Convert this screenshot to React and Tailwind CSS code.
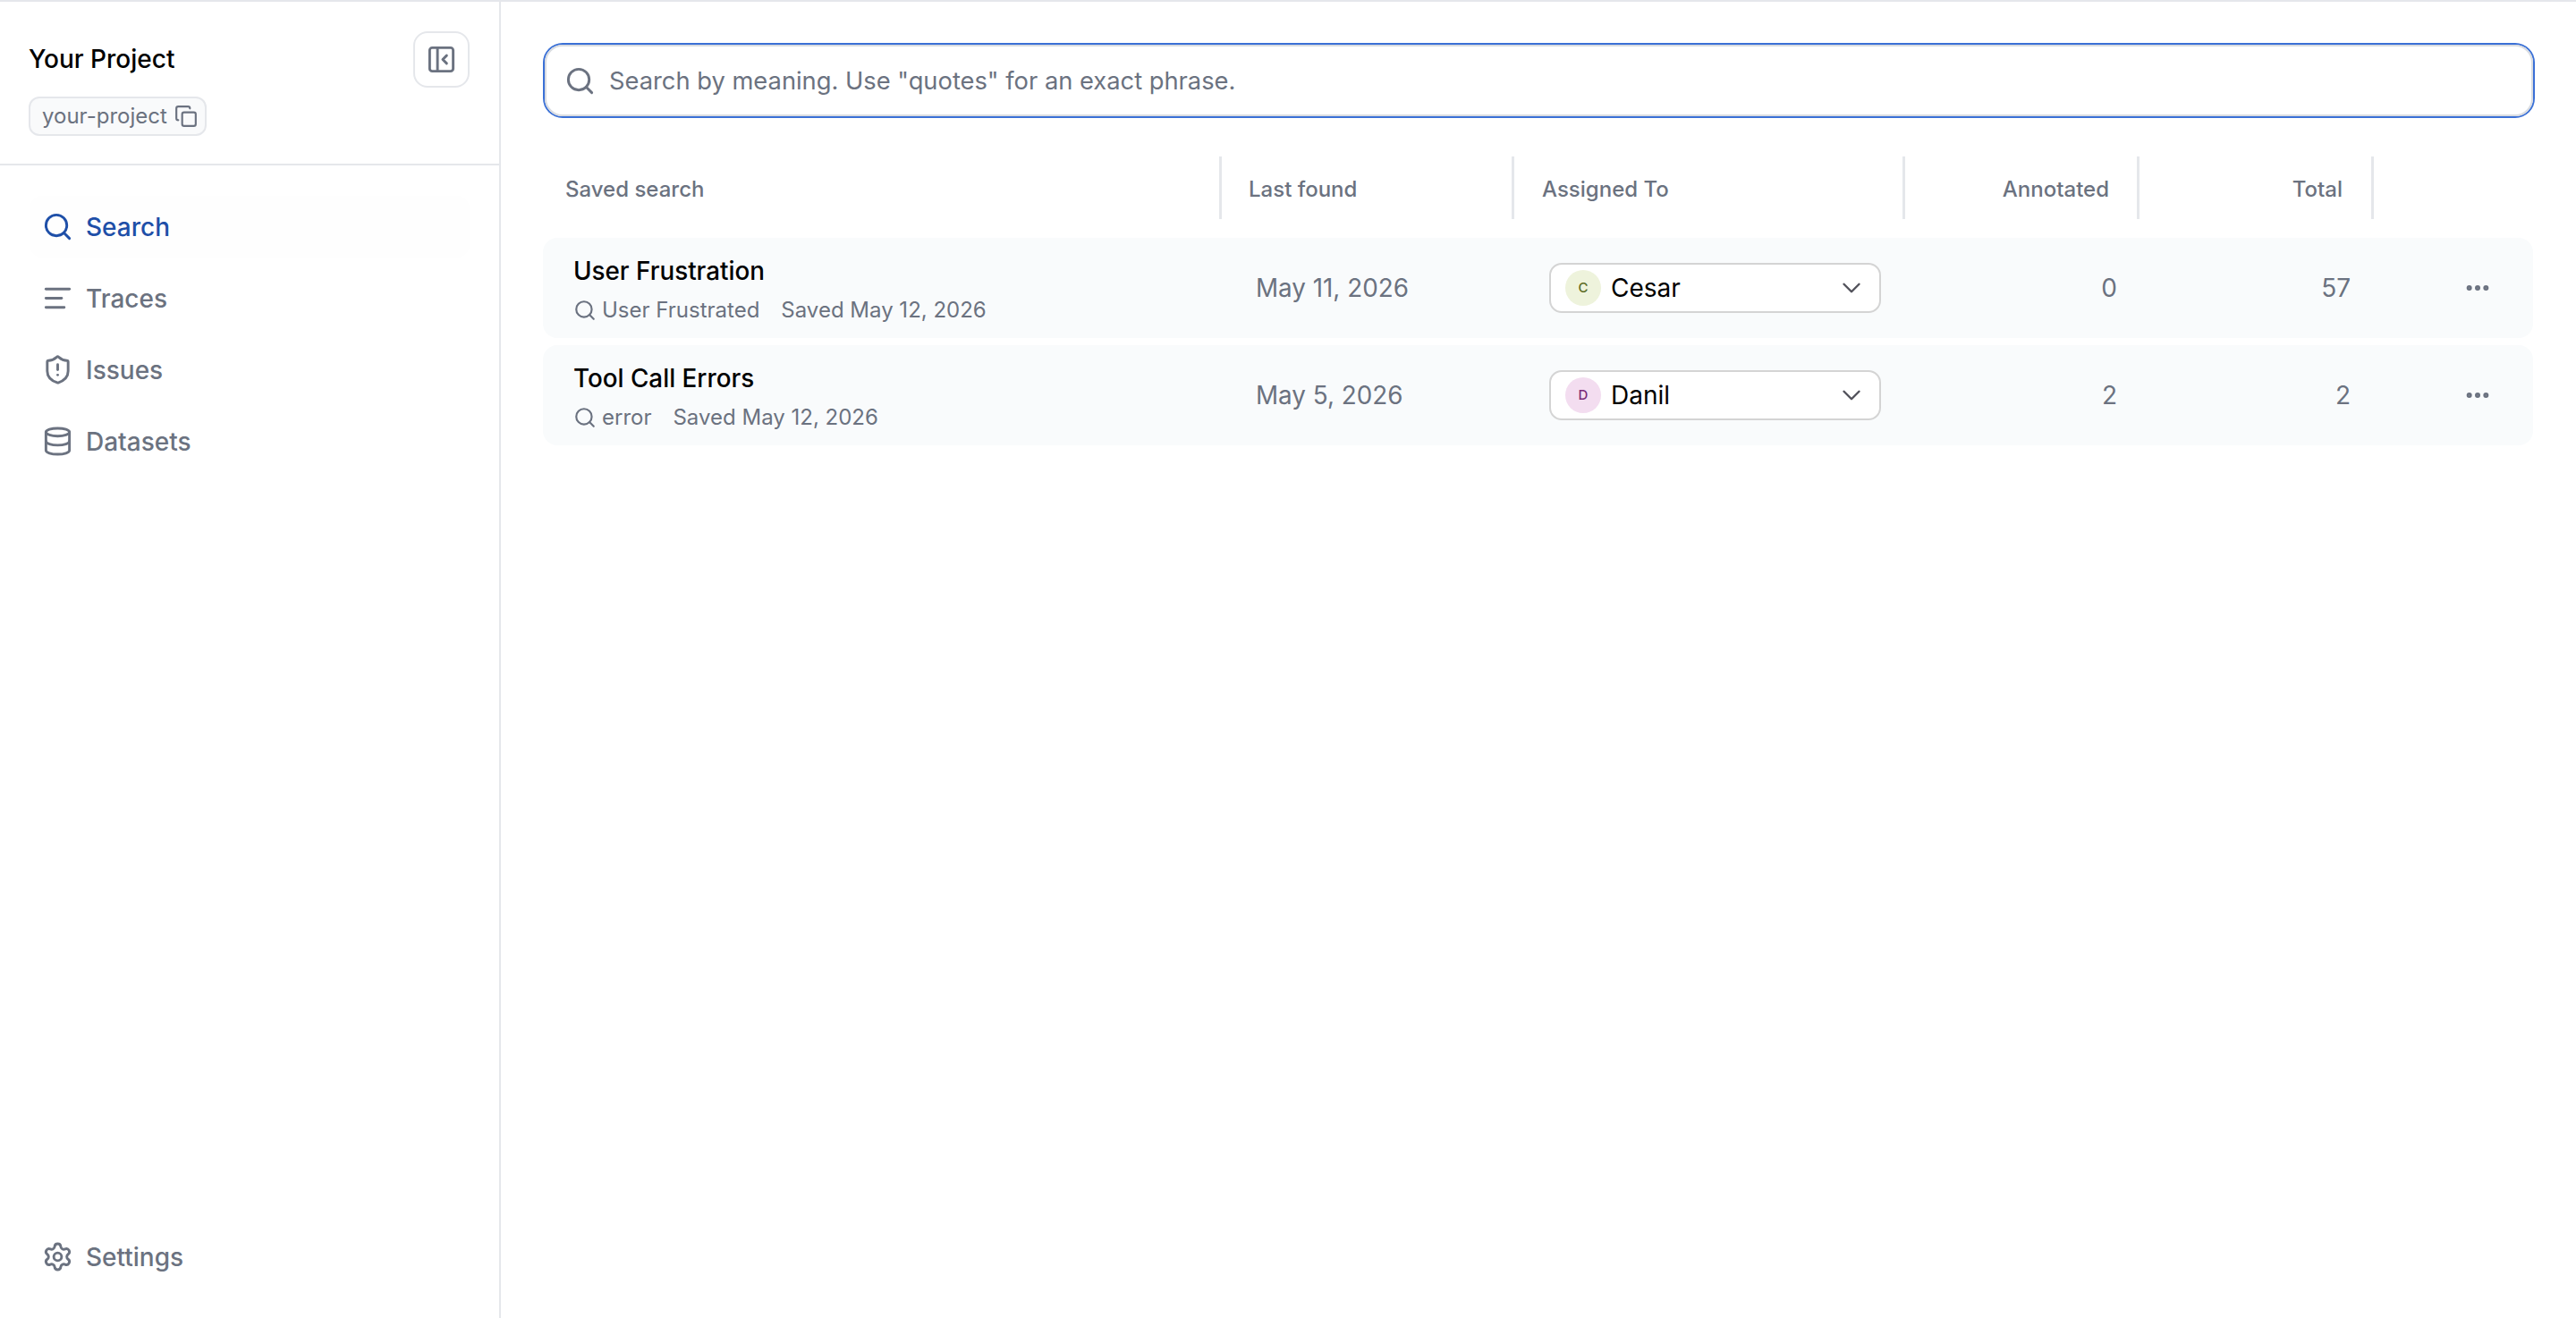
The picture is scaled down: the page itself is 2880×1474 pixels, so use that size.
import React from "react";
import { Search, AlignLeft, ShieldAlert, Database, Settings, Copy, ChevronDown, Ellipsis, PanelLeftClose } from "lucide-react";

const nav = [
  { label: "Search", Icon: Search, active: true },
  { label: "Traces", Icon: AlignLeft },
  { label: "Issues", Icon: ShieldAlert },
  { label: "Datasets", Icon: Database },
];

const GRID = "grid grid-cols-[759px_327px_437px_262px_262px_178px]";

const rows = [
  {
    title: "User Frustration", query: "User Frustrated", saved: "Saved May 12, 2026", last: "May 11, 2026",
    who: "Cesar", initial: "C", avatar: "bg-[#eef3dc] text-[#5b6b1f]", annotated: "0", total: "57",
  },
  {
    title: "Tool Call Errors", query: "error", saved: "Saved May 12, 2026", last: "May 5, 2026",
    who: "Danil", initial: "D", avatar: "bg-[#f3ddf0] text-[#7a2a78]", annotated: "2", total: "2",
  },
];

function NavItem({ label, Icon, active }) {
  return (
    <div className={`flex h-[69px] items-center gap-[14px] rounded-[14px] pl-[14px] text-[28px] font-medium ${active ? "bg-[#fefefe] text-[#1e4fa8]" : "text-[#6b7280]"}`}>
      <Icon size={35} strokeWidth={2} className="shrink-0" />
      <span>{label}</span>
    </div>
  );
}

function HeaderCell({ children, className = "" }) {
  return (
    <div className={`flex h-[70px] items-center border-r-[3px] border-[#e5e7eb] pt-[3px] text-[24px] font-medium text-[#6b7280] ${className}`}>
      {children}
    </div>
  );
}

function Row({ r }) {
  return (
    <div className={`${GRID} h-[112px] items-center rounded-[16px] bg-[#f9fbfc]`}>
      <div className="pl-[34px] pt-[3px]">
        <div className="text-[27.8px] leading-[36px] font-medium text-black">{r.title}</div>
        <div className="mt-[10px] flex items-center text-[24px] leading-[32px] text-[#6b7280]">
          <Search size={26} strokeWidth={2} className="mr-[6px] shrink-0" />
          <span>{r.query}</span>
          <span className="ml-[24px]">{r.saved}</span>
        </div>
      </div>
      <div className="pl-[38px] pt-[2px] text-[27.8px] text-[#6b7280]">{r.last}</div>
      <div className="pl-[39px]">
        <div className="flex h-[56px] w-[371px] items-center rounded-[14px] border-2 border-[#d4d4d4] bg-white pl-[16px] pr-[14px]">
          <div className={`flex size-[40px] shrink-0 items-center justify-center rounded-full text-[15px] font-medium ${r.avatar}`}>{r.initial}</div>
          <span className="ml-[11px] flex-1 text-[28px] text-black">{r.who}</span>
          <ChevronDown size={34} strokeWidth={1.7} className="text-[#52525b]" />
        </div>
      </div>
      <div className="pr-[25px] text-right text-[28px] text-[#6b7280]">{r.annotated}</div>
      <div className="pr-[26px] text-right text-[28px] text-[#6b7280]">{r.total}</div>
      <div className="flex justify-center pl-[53px]">
        <Ellipsis size={32} strokeWidth={2.5} className="text-[#6b7280]" />
      </div>
    </div>
  );
}

export default function App() {
  return (
    <div className="flex h-[1474px] w-[2880px] overflow-hidden border-t-2 border-[#e5e7eb] bg-white font-['Inter',sans-serif]">
      <aside className="flex w-[560px] shrink-0 flex-col border-r-2 border-[#e5e7eb]">
        <div className="flex h-[183px] shrink-0 items-start justify-between border-b-2 border-[#e5e7eb] pl-[32px] pr-[33px] pt-[33px]">
          <div>
            <div className="flex h-[62px] items-center text-[28px] font-medium text-black">Your Project</div>
            <div className="mt-[11px] flex h-[44px] w-[199px] items-center rounded-[12px] border-2 border-[#e5e7eb] bg-[#f9fafb] pl-[13px] text-[24px] text-[#6b7280]">
              <span>your-project</span>
              <Copy size={26} strokeWidth={2} className="ml-[8px] shrink-0" />
            </div>
          </div>
          <button className="flex size-[63px] items-center justify-center rounded-[16px] border-2 border-[#e5e7eb] bg-white text-[#6b7280]">
            <PanelLeftClose size={35} strokeWidth={2} />
          </button>
        </div>
        <nav className="flex flex-col gap-[11px] px-[33px] pt-[34px]">
          {nav.map((n) => <NavItem key={n.label} {...n} />)}
        </nav>
        <div className="mt-auto px-[33px] pb-[34px]">
          <NavItem label="Settings" Icon={Settings} />
        </div>
      </aside>
      <main className="min-w-0 flex-1 pl-[47px] pt-[48px]">
        <div className="ml-[2px] flex h-[80px] w-[2223px] items-center rounded-[20px] border-2 border-[#d9dce1] pl-[20px] shadow-[0_0_0_2px_#3a70d6]">
          <Search size={35} strokeWidth={2} className="shrink-0 text-[#6b7280]" />
          <span className="ml-[15px] pt-[3px] text-[27.3px] text-[#6b7280]">Search by meaning. Use "quotes" for an exact phrase.</span>
        </div>
        <div className={`${GRID} mt-[45px] w-[2225px]`}>
          <HeaderCell className="pl-[25px]">Saved search</HeaderCell>
          <HeaderCell className="pl-[30px]">Last found</HeaderCell>
          <HeaderCell className="pl-[31px]">Assigned To</HeaderCell>
          <HeaderCell className="justify-end pr-[31px]">Annotated</HeaderCell>
          <HeaderCell className="justify-end pr-[32px]">Total</HeaderCell>
          <div />
        </div>
        <div className="mt-[21px] flex w-[2225px] flex-col gap-[8px]">
          {rows.map((r) => <Row key={r.title} r={r} />)}
        </div>
      </main>
    </div>
  );
}
